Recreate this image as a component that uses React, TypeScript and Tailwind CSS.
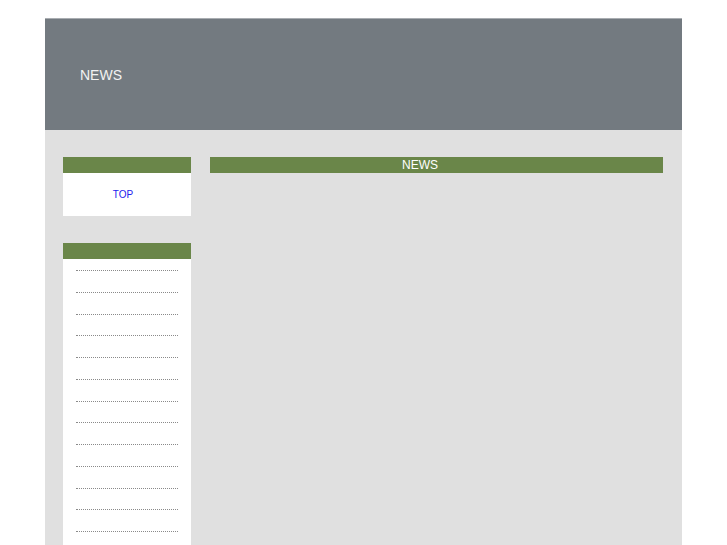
import React from "react";

export default function App() {
  const items = Array.from({ length: 13 });
  return (
    <div className="w-[727px] h-[545px] bg-white overflow-hidden" style={{ fontFamily: '"Liberation Sans", Arial, sans-serif' }}>
      <div className="ml-[45px] mt-[18px] w-[637px] flex flex-col h-[527px]">
        <div className="h-[112px] shrink-0 border-t border-[#a9adb1] bg-[#737a80] flex items-center pl-[35px]">
          <span className="text-[14px] text-[#f2f2f2] leading-none">NEWS</span>
        </div>
        <div className="flex-1 bg-[#e0e0e0] flex pt-[27px] pl-[18px] pr-[19px] gap-[19px] overflow-hidden">
          <div className="w-[128px] shrink-0 flex flex-col">
            <div className="h-[16px] shrink-0 bg-[#6a8649]" />
            <div className="h-[43px] shrink-0 bg-white flex items-center justify-center pr-[8px]">
              <span className="text-[10px] text-[#2222ee] leading-none">TOP</span>
            </div>
            <div className="mt-[27px] h-[16px] shrink-0 bg-[#6a8649]" />
            <div className="flex-1 shrink-0 bg-white pt-[11px]">
              {items.map((_, i) => (
                <div key={i} className="mx-[13px] h-[21.75px] border-t border-dotted border-[#8a8a8a]" />
              ))}
            </div>
          </div>
          <div className="flex-1">
            <div className="h-[16px] bg-[#6a8649] flex items-center justify-center pr-[33px]">
              <span className="text-[12px] text-white leading-none">NEWS</span>
            </div>
          </div>
        </div>
      </div>
    </div>
  );
}
